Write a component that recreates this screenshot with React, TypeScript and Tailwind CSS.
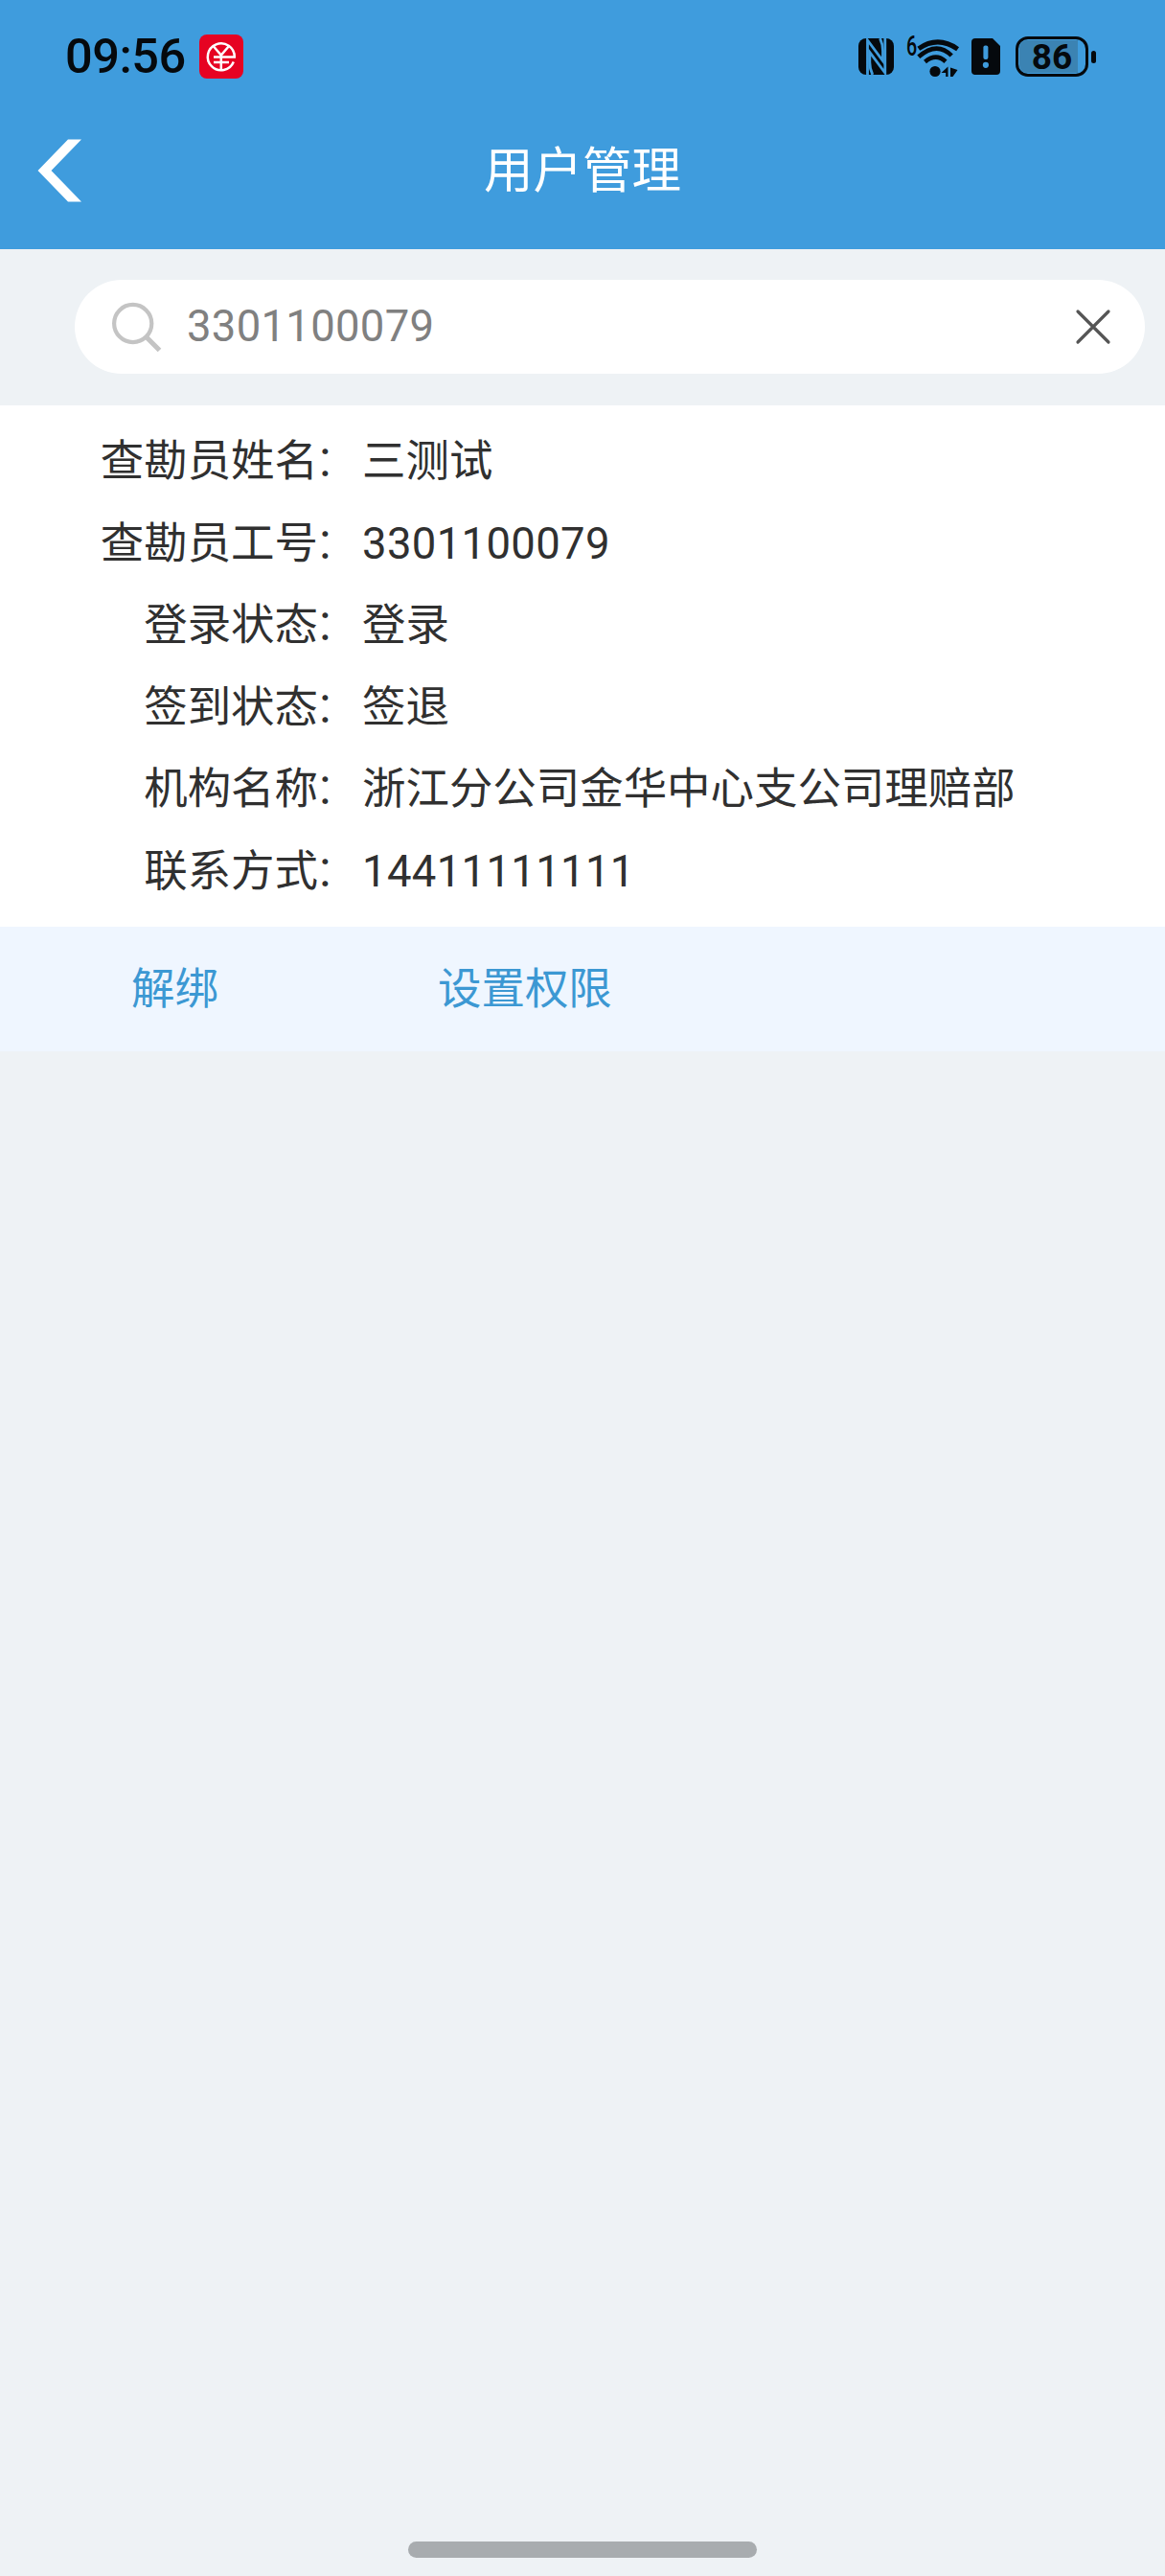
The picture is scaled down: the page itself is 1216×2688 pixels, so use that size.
import React from "react";

const fields = [
  { label: "查勘员姓名", value: "三测试" },
  { label: "查勘员工号", value: "3301100079", numeric: true },
  { label: "登录状态", value: "登录" },
  { label: "签到状态", value: "签退" },
  { label: "机构名称", value: "浙江分公司金华中心支公司理赔部" },
  { label: "联系方式", value: "14411111111", numeric: true },
];

function PayBadge() {
  return (
    <svg className="h-[46px] w-[46px]" viewBox="0 0 46 46" fill="none">
      <rect width="46" height="46" rx="8" fill="#e60322" />
      <g stroke="#fff" strokeWidth="2.5">
        <path d="M35.8 28.5A14 14 0 1 1 36.8 23.6" />
        <path d="M15 12.5L22.8 21.5L30.6 12.5" />
        <path d="M15 23.6H38M15 29H31M22.8 21v16" />
      </g>
    </svg>
  );
}

function NfcIcon() {
  return (
    <svg className="h-[38px] w-[37px]" viewBox="0 0 37 38">
      <rect width="37" height="38" rx="8" fill="#05090d" />
      <g fill="none" stroke="#3f9cdd" strokeWidth="2.8">
        <path d="M9.5 38V2L25.5 23.5V13Q25.5 6 22.5 0" />
        <path d="M27.8 0V36L11.8 14.5V25Q11.8 32 14.8 38" />
      </g>
    </svg>
  );
}

function WifiIcon() {
  return (
    <div className="relative ml-[13px] h-[46px] w-[56px]">
      <span className="absolute top-0 left-0 origin-left [transform:scaleX(0.68)] text-[29px] leading-[24px] font-medium">6</span>
      <svg className="h-[46px] w-[56px]" viewBox="0 0 56 46" fill="none">
        <g stroke="#05090d" strokeWidth="5">
          <path d="M12.8 14.8Q33 0.8 53.6 15.2" />
          <path d="M12.8 23.2Q32 6.5 47.2 22" strokeWidth="4.6" />
          <path d="M19.5 28.5Q31 19 41 28.2" strokeWidth="4.6" />
        </g>
        <circle cx="30" cy="38.5" r="5.6" fill="#05090d" />
        <path d="M43.5 33.5v10.5h-2.3v-4h-4.7zM46 34.5l7.5 2.5l-5 7H46z" fill="#05090d" />
      </svg>
    </div>
  );
}

function SimIcon() {
  return (
    <svg className="ml-[12px] h-[38px] w-[30px]" viewBox="0 0 30 38">
      <path d="M4 0h18l8 8v26a4 4 0 0 1-4 4H4a4 4 0 0 1-4-4V4a4 4 0 0 1 4-4z" fill="#05090d" />
      <rect x="12.4" y="7.5" width="5" height="14.5" rx="2" fill="#3f9cdd" />
      <circle cx="14.9" cy="27.8" r="3.1" fill="#3f9cdd" />
    </svg>
  );
}

function Battery() {
  return (
    <div className="ml-[16px] flex items-center">
      <div className="relative flex h-[42px] w-[76px] items-center justify-center rounded-[13px] border-[3.5px] border-[#05090d]">
        <div className="absolute inset-y-[1px] left-[1px] w-[61px] rounded-l-[8px] bg-[#3b83b3]" />
        <span className="relative text-[37px] leading-none font-bold">86</span>
      </div>
      <div className="ml-[3px] h-[13px] w-[5px] rounded-[2.5px] bg-[#05090d]" />
    </div>
  );
}

export default function App() {
  return (
    <div className="flex h-[2688px] w-[1216px] flex-col bg-[#eef2f5] text-[45.45px] leading-none text-[#303030] [font-family:Roboto,'Noto_Sans_CJK_SC',sans-serif]">
      <header className="h-[260px] bg-[#3f9cdd]">
        <div className="flex h-[118px] items-center pr-[72px] pl-[68px] text-[#05090d]">
          <span className="w-[140px] pt-[1px] text-[50.5px] leading-none font-medium tracking-[-0.5px]">09:56</span>
          <PayBadge />
          <div className="ml-auto flex items-center">
            <NfcIcon />
            <WifiIcon />
            <SimIcon />
            <Battery />
          </div>
        </div>
        <div className="grid h-[120px] grid-cols-[1fr_auto_1fr] items-center pr-[39px] pl-[39px] text-white">
          <svg className="h-[66px] w-[48px]" viewBox="0 0 48 66">
            <path d="M32 0.5H46L14.5 33L46 65.5H32L0.5 33z" fill="#fff" />
          </svg>
          <h1 className="pt-[2px] text-[51.5px] leading-none">用户管理</h1>
        </div>
      </header>

      <div className="flex h-[163px] items-center pr-[21px] pb-[1px] pl-[78px]">
        <div className="flex h-[98px] flex-1 items-center rounded-full bg-white pr-[35px] pl-[38px]">
          <svg className="h-[54px] w-[54px]" viewBox="0 0 54 54" fill="none" stroke="#c4c4c4">
            <circle cx="22.7" cy="23.5" r="19.6" strokeWidth="4.2" />
            <path d="M36.5 37.5L50.5 51.5" strokeWidth="5.2" />
          </svg>
          <span className="ml-[25px] tracking-[0.3px] text-[#808080]">3301100079</span>
          <svg className="ml-auto h-[38px] w-[38px]" viewBox="0 0 38 38" fill="none" stroke="#555" strokeWidth="3.2" strokeLinecap="round">
            <path d="M3 3L35 35M35 3L3 35" />
          </svg>
        </div>
      </div>

      <main className="flex h-[544px] flex-col bg-white pt-[16px]">
        {fields.map((f) => (
          <div key={f.label} className="flex h-[85.6px] items-center">
            <div className="flex w-[378px] justify-end">
              <span>{f.label}</span>
              <span className="ml-[-4px] w-[50px] font-light">：</span>
            </div>
            <span className={f.numeric ? "tracking-[0.35px]" : ""}>{f.value}</span>
          </div>
        ))}
      </main>

      <div className="flex h-[130px] items-center bg-[#eff6ff] pt-[2px] pl-[137px] text-[#3c98d3]">
        <button className="w-[320px] text-left">解绑</button>
        <button>设置权限</button>
      </div>

      <div className="mx-auto mt-auto mb-[19px] h-[17px] w-[364px] rounded-full bg-[#a8acaf]" />
    </div>
  );
}
